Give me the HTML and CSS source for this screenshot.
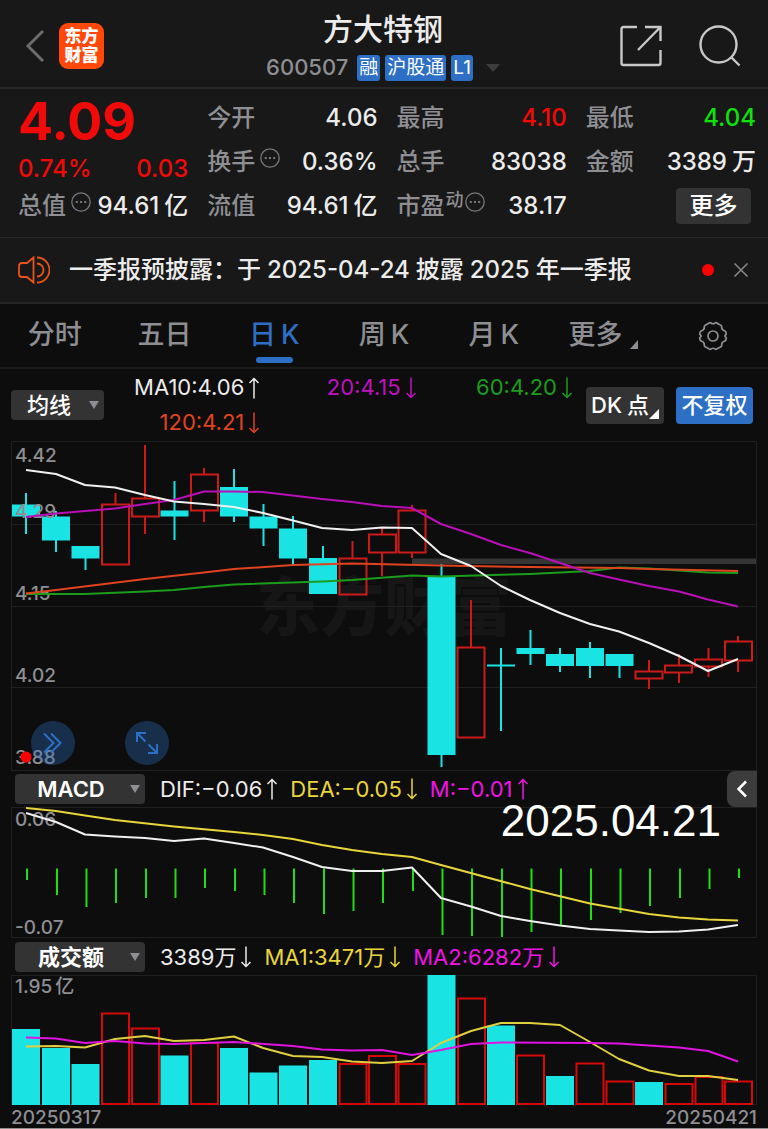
FILE: index.html
```html
<!DOCTYPE html>
<html lang="zh-CN">
<head>
    <meta charset="utf-8">
    <meta name="viewport" content="width=device-width, initial-scale=1">
    <title>方大特钢 600507</title>
    <link rel="stylesheet" href="styles.css">
</head>
<body>
    <svg class="defs" width="0" height="0" aria-hidden="true">
        <symbol id="up" viewBox="0 0 12 22"><path d="M6 21.500V1.500M1.500 6L6 1.500L10.500 6"/></symbol>
        <symbol id="down" viewBox="0 0 12 22"><path d="M6 .5V20.500M1.500 16L6 20.500L10.500 16"/></symbol>
        <symbol id="dots" viewBox="0 0 20 20">
            <circle cx="10" cy="10" r="9.200" fill="none" stroke="currentColor" stroke-width="1.300"/>
            <path d="M4.800 9h2v2h-2zM9 9h2v2h-2zM13.200 9h2v2h-2z" fill="currentColor"/>
        </symbol>
    </svg>

    <header class="header">
        <div class="header-left">
            <button class="icon-btn" aria-label="返回">
                <svg width="20" height="34" viewBox="0 0 20 34"><path d="M18 2L3 17L18 32" fill="none" stroke="#6b6b6b" stroke-width="3"/></svg>
            </button>
            <a href="#" class="logo"><span>东方</span><span>财富</span></a>
        </div>
        <div class="header-title">
            <h1>方大特钢</h1>
            <div class="stock-sub">
                <span class="code">600507</span>
                <span class="tag">融</span>
                <span class="tag">沪股通</span>
                <span class="tag">L1</span>
                <svg class="caret" width="14" height="8" viewBox="0 0 14 8"><path d="M0 0h14L7 8z" fill="#3d3d3f"/></svg>
            </div>
        </div>
        <div class="header-right">
            <button class="icon-btn" aria-label="分享">
                <svg width="42" height="42" viewBox="0 0 42 42" fill="none" stroke="#c8c8c8" stroke-width="2.400"><path d="M17 2H3.500Q1.500 2 1.500 4V38Q1.500 40 3.500 40H38.500Q40.500 40 40.500 38V25M25 2H40.500V16M40 2.500L18 25"/></svg>
            </button>
            <button class="icon-btn" aria-label="搜索">
                <svg width="42" height="42" viewBox="0 0 42 42" fill="none" stroke="#c8c8c8" stroke-width="2.400"><circle cx="19.500" cy="19.500" r="18"/><path d="M32 32L40.500 40.500"/></svg>
            </button>
        </div>
    </header>

    <section class="quote">
        <div class="quote-col">
            <div class="price">4.09</div>
            <div class="row change"><span>0.74%</span><span>0.03</span></div>
            <div class="row"><span class="label">总值<svg class="info"><use href="#dots"/></svg></span><span>94.61<span class="unit">亿</span></span></div>
        </div>
        <div class="quote-col">
            <div class="row"><span class="label">今开</span><span>4.06</span></div>
            <div class="row"><span class="label">换手<svg class="info"><use href="#dots"/></svg></span><span>0.36%</span></div>
            <div class="row"><span class="label">流值</span><span>94.61<span class="unit">亿</span></span></div>
        </div>
        <div class="quote-col">
            <div class="row"><span class="label">最高</span><span class="red">4.10</span></div>
            <div class="row"><span class="label">总手</span><span>83038</span></div>
            <div class="row"><span class="label">市盈<small>动</small><svg class="info"><use href="#dots"/></svg></span><span>38.17</span></div>
        </div>
        <div class="quote-col">
            <div class="row"><span class="label">最低</span><span class="green">4.04</span></div>
            <div class="row"><span class="label">金额</span><span>3389<span class="unit">万</span></span></div>
            <div class="row row-end"><button class="more-btn">更多</button></div>
        </div>
    </section>

    <section class="news">
        <svg width="32" height="28" viewBox="0 0 32 28" fill="none" stroke="#e8541a" stroke-width="1.800"><path d="M15.500 1.500V26.500L9 21H4Q1 21 1 18V10Q1 7 4 7H9ZM19 7.500A6.500 6.500 0 0 1 19 20.500M19 1.500A12.500 12.500 0 0 1 19 26.500"/></svg>
        <a href="#" class="news-text">一季报预披露：于<span class="num">2025-04-24</span>披露<span class="num">2025</span>年一季报</a>
        <span class="news-dot"></span>
        <button class="icon-btn" aria-label="关闭">
            <svg width="14" height="14" viewBox="0 0 14 14"><path d="M.5 .5L13.500 13.500M13.500 .5L.5 13.500" stroke="#8a8a8a" stroke-width="1.500"/></svg>
        </button>
    </section>

    <nav class="tabs">
        <button>分时</button>
        <button>五日</button>
        <button class="active">日<span class="unit">K</span></button>
        <button>周<span class="unit">K</span></button>
        <button>月<span class="unit">K</span></button>
        <button class="tab-more">更多<svg width="8" height="9" viewBox="0 0 8 9"><path d="M8 0V9H0z" fill="#8e8e93"/></svg></button>
        <button aria-label="设置">
            <svg width="30" height="30" viewBox="0 0 30 30" fill="none" stroke="#8e8e93" stroke-width="1.700"><path d="M10.500 2.500Q12 1 13 2Q15 3.500 17 2Q18 1 19.500 2.500L22.500 4Q24 4.500 23.700 6.500Q23.800 9 26.500 9.700Q28 10.500 28.300 12.500Q28.500 13.500 27.300 14.200Q26.500 15 27.300 15.800Q28.500 16.500 28.300 17.500Q28 19.500 26.500 20.300Q23.800 21 23.700 23.500Q24 25.500 22.500 26L19.500 27.500Q18 29 17 28Q15 26.500 13 28Q12 29 10.500 27.500L7.500 26Q6 25.500 6.300 23.500Q6.200 21 3.500 20.300Q2 19.500 1.700 17.500Q1.500 16.500 2.700 15.800Q3.500 15 2.700 14.200Q1.500 13.500 1.700 12.500Q2 10.500 3.500 9.700Q6.200 9 6.300 6.500Q6 4.500 7.500 4Z"/><circle cx="15" cy="15" r="5"/></svg>
        </button>
    </nav>

    <main class="charts">
        <div class="ma-bar">
            <label class="picker"><select aria-label="主图指标"><option>均线</option></select></label>
            <div class="ma-list">
                <span>MA10:4.06<svg class="arrow"><use href="#up"/></svg></span>
                <span class="purple">20:4.15<svg class="arrow"><use href="#down"/></svg></span>
                <span class="ma60">60:4.20<svg class="arrow"><use href="#down"/></svg></span>
                <span class="orange">120:4.21<svg class="arrow"><use href="#down"/></svg></span>
            </div>
            <div class="ma-actions">
                <button class="dk-btn">DK<span class="unit">点</span><svg width="10" height="10" viewBox="0 0 10 10"><path d="M10 0V10H0z" fill="#fff"/></svg></button>
                <button class="fq-btn">不复权</button>
            </div>
        </div>

        <div class="chart">
            <svg class="plot" viewBox="11 441 746 330">
                <text class="watermark" x="256" y="630">东方财富</text>
                <path class="grid" d="M11.500 441.500H756.500V770.500H11.500ZM11.500 524.500H756.500M11.500 606.500H756.500M11.500 687.500H756.500"/>
                <path d="M412 558.500H756V564H412z" fill="#353535"/>
                <!-- falling candles -->
                <path class="wick-down" d="M26 493V534M56 511V552M85.500 546V570M174.500 481V540M234 469V522M263.500 504V546M293 516V564M323 546V594M441.500 564V767M501 648V731M487 665.500H515M530.500 630V665M560 648V672M590 642V678M619.500 654V678"/>
                <path class="fall" d="M12 504.500h28v12h-28zM42 516.500h28v24h-28zM71.500 546h28v12.500h-28zM160.500 510.500h28v6h-28zM220 487h28v29.500h-28zM249.500 516.500h28v12h-28zM279 528.500h28v30h-28zM309 558h28v36h-28zM427.500 577h28v178h-28zM516.500 648h28v6h-28zM546 654h28v12h-28zM576 648h28v18h-28zM605.500 654h28v12h-28z"/>
                <!-- rising candles -->
                <path class="rise" d="M102 504.500h27v60h-27zM115.500 493V504M132 498.500h27v18h-27zM145 445V498M145 517V534M191 474.500h27v36h-27zM204 468V474M204 511V522M339.500 558.500h27v36h-27zM352.500 541V558M369 534.500h27v18h-27zM382 528V534M382 553V576M398.500 510.500h27v42h-27zM412 505V510M412 553V558M457.500 647.500h27v90h-27zM471 600V647M635.500 671.500h27v7h-27zM649 660V671M649 678V689M665 665.500h27v7h-27zM679 654V665M679 672V683M695 659.500h27v7h-27zM708.500 648V659M708.500 666V677M725 641.500h27v19h-27zM738 636V641M738 660V672"/>
                <g class="axis">
                    <text x="15" y="462">4.42</text>
                    <text x="15" y="518">4.29</text>
                    <text x="15" y="600">4.15</text>
                    <text x="15" y="682">4.02</text>
                    <text x="15" y="764">3.88</text>
                </g>
                <polyline class="line" stroke="#1c9c1c" points="26,594 85,594 145,591.5 174,590 204,587 234,584.5 322,581.5 352,580 412,575.5 441,576.5 530,574 590,571 619,567.5 649,568.5 708,572.5 738,573"/>
                <polyline class="line" stroke="#e0431f" points="26,593.5 56,590 145,579 204,572.5 234,569 293,565 352,563.5 441,565.5 530,567 619,568 649,569 738,571"/>
                <polyline class="line" stroke="#b80fb8" points="26,517 56,513.5 115,508.5 145,504 174,500 204,491.5 234,491.5 263,492 322,499 352,502 382,506 412,508 441,524 471,534 501,545 530,553 560,563 590,573 619,579.5 649,586 679,591.5 708,599.5 738,606.5"/>
                <polyline class="line" stroke="#f0f0f0" points="26,470 56,474 85,485 115,487.5 145,495 174,501.5 204,504 234,507 263,513 293,520.5 322,528 352,530 382,527.5 412,528 441,554 471,566 501,586 530,600 560,613 590,624 619,631.5 649,643 679,656 708,671 738,659"/>
                <circle cx="26" cy="757" r="5.500" fill="#f00"/>
            </svg>
            <div class="chart-tools">
                <button aria-label="快进"><svg width="20" height="22" viewBox="0 0 20 22"><path d="M1 1.500L10.500 11L1 20.500M8 1.500L17.500 11L8 20.500"/></svg></button>
                <button aria-label="全屏"><svg width="24" height="24" viewBox="0 0 24 24"><path d="M2 11V2H11M2 2L10.500 10.500M22 13V22H13M22 22L13.500 13.500"/></svg></button>
            </div>
        </div>

        <div class="legend">
            <label class="picker picker-wide"><select aria-label="副图指标一"><option>MACD</option></select></label>
            <span>DIF:−0.06<svg class="arrow"><use href="#up"/></svg></span>
            <span class="yellow">DEA:−0.05<svg class="arrow"><use href="#down"/></svg></span>
            <span class="magenta">M:−0.01<svg class="arrow"><use href="#up"/></svg></span>
            <button class="collapse" aria-label="展开">
                <svg width="10" height="18" viewBox="0 0 10 18"><path d="M9 1.500L1.500 9L9 16.500" fill="none" stroke="#fff" stroke-width="2.600"/></svg>
            </button>
        </div>

        <div class="chart">
            <svg class="plot" viewBox="11 807 746 132">
                <path class="grid" d="M11.500 807.500H756.500V937.500H11.500Z"/>
                <path class="macd-bar" d="M27 868.500V880M57 868.500V895M86.500 868.500V907M116 868.500V903M146 868.500V898M175.500 868.500V898M205 868.500V888M235 868.500V891M264.500 868.500V895M294 868.500V903M324 868.500V914M353.500 868.500V911M383 868.500V903M413 868.500V891M442.500 868.500V935M472 868.500V936M502 868.500V937M531.500 868.500V932M561 868.500V925M591 868.500V920M620.500 868.500V913M650 868.500V906M680 868.500V898M709.500 868.500V889M739 868.500V878"/>
                <g class="axis">
                    <text x="15" y="826">0.06</text>
                    <text x="15" y="934">-0.07</text>
                </g>
                <polyline class="line" stroke="#f0f0f0" points="26,813 56,822 85,834.5 115,836.5 145,838 174,841 204,838.5 234,843 263,847.5 293,857 322,867 352,871 382,871 412,867.5 441,898 471,906.5 501,916 530,921 560,925.5 590,929 619,930.5 649,932 679,931.5 708,929.5 738,925"/>
                <polyline class="line" stroke="#e8d53c" points="26,808 56,811 85,815.5 115,820 174,826.5 234,832 263,835 293,839 322,845 352,850 382,854 412,857 441,865 530,889 590,903.5 649,914 679,917.5 708,919.5 738,920.5"/>
            </svg>
            <div class="date-stamp">2025.04.21</div>
        </div>

        <div class="legend">
            <label class="picker picker-wide"><select aria-label="副图指标二"><option>成交额</option></select></label>
            <span>3389万<svg class="arrow"><use href="#down"/></svg></span>
            <span class="yellow">MA1:3471万<svg class="arrow"><use href="#down"/></svg></span>
            <span class="magenta">MA2:6282万<svg class="arrow"><use href="#down"/></svg></span>
        </div>

        <div class="chart">
            <svg class="plot" viewBox="11 975 746 130">
                <path class="grid" d="M11.500 975.500H756.500V1104.500H11.500Z"/>
                <path class="fall" d="M12 1029h28v76h-28zM42 1048h28v57h-28zM71.500 1064h28v41h-28zM160.500 1055.500h28v49.500h-28zM220 1048h28v57h-28zM249.500 1072.500h28v32.500h-28zM279 1065.500h28v39.500h-28zM309 1060h28v45h-28zM427.500 975h28v130h-28zM487 1025.500h28v79.500h-28zM546 1076h28v29h-28zM635 1082h28v23h-28z"/>
                <path class="vol-rise" d="M102 1013.500h27v90.500h-27zM132 1028.500h27v75.500h-27zM191 1043h27v61h-27zM339.500 1064h27v40h-27zM369 1056h27v48h-27zM398.500 1064h27v40h-27zM458 998.500h27v105.500h-27zM517 1055.500h27v48.500h-27zM576.500 1063.500h27v40.500h-27zM606.500 1081.500h27v22.500h-27zM665.500 1084h27v20h-27zM695.500 1077h27v27h-27zM725 1081.500h27v22.500h-27z"/>
                <g class="axis"><text x="15" y="993">1.95<tspan dx="3">亿</tspan></text></g>
                <polyline class="line" stroke="#e0d040" points="26,1046.5 56,1046 85,1047.5 115,1039 145,1036 174,1041 204,1040 234,1036.5 263,1048 293,1056 322,1057 352,1061.5 382,1063 412,1061 441,1043 471,1031 501,1023 530,1023 560,1025 590,1042 619,1059 649,1070.5 679,1076 708,1076 738,1080"/>
                <polyline class="line" stroke="#e013e0" points="26,1037.5 56,1038.5 85,1043 115,1041 145,1043.5 174,1044 234,1042 293,1046 322,1049.5 352,1050.5 382,1050 412,1055 441,1050 471,1044 501,1042.5 590,1043 619,1043.5 679,1047.5 708,1051 738,1061.5"/>
            </svg>
        </div>
        <div class="dates"><span>20250317</span><span>20250421</span></div>
    </main>
</body>
</html>
```
FILE: styles.css
```css
* {
    box-sizing: border-box;
}
body {
    margin: 0;
    background: #0d0d0d;
    color: #ececec;
    font-family: Inter, "Noto Sans CJK SC", sans-serif;
    font-size: 24px;
    font-weight: 500;
    line-height: 1.2;
    border-bottom: 1px solid #8e8e8e;
}
button, select {
    font: inherit;
    color: inherit;
    background: none;
    border: none;
    padding: 0;
    margin: 0;
    cursor: pointer;
}
a {
    color: inherit;
    text-decoration: none;
}
svg {
    flex: none;
}
.defs {
    position: absolute;
}
.icon-btn {
    display: flex;
}
.unit {
    margin-left: 5px;
}
.num {
    margin: 0 6px;
}
.red {
    color: #f00a0a;
}
.green {
    color: #10e010;
}
.purple {
    color: #c010c0;
}
.ma60 {
    color: #1c9c1c;
}
.orange {
    color: #e0431f;
}
.yellow {
    color: #e8d53c;
}
.magenta {
    color: #ee14e2;
}

/* header */
.header {
    display: grid;
    grid-template-columns: 1fr auto 1fr;
    align-items: center;
    height: 89px;
    padding: 4px 27px 0 25px;
    background: #181818;
    border-bottom: 2px solid #262627;
}
.header-left {
    display: flex;
    align-items: center;
    gap: 14px;
}
.header-right {
    display: flex;
    justify-content: flex-end;
    gap: 37px;
}
.logo {
    display: flex;
    flex-direction: column;
    align-items: center;
    justify-content: center;
    width: 45px;
    height: 46px;
    border-radius: 9px;
    background: #ff480a;
    color: #fff;
    font-size: 17px;
    font-weight: 900;
    line-height: 19px;
}
.header-title {
    text-align: center;
}
h1 {
    margin: 0;
    font-size: 30px;
    font-weight: 500;
    line-height: 44px;
}
.stock-sub {
    display: flex;
    align-items: center;
    justify-content: center;
    gap: 5px;
    height: 34px;
}
.code {
    margin-right: 4px;
    color: #8e8e93;
    font-size: 22px;
}
.tag {
    padding: 0 2px;
    border-radius: 3px;
    background: #2d6fc4;
    color: #fff;
    font-size: 19px;
    font-weight: 400;
    line-height: 26px;
}
.caret {
    margin-left: 8px;
}

/* quote */
.quote {
    display: grid;
    grid-template-columns: repeat(4, minmax(0, 1fr));
    gap: 19px;
    padding: 7px 12px 9px 18px;
    background: #181818;
    border-bottom: 1px solid #262627;
}
.price {
    height: 52px;
    color: #f00a0a;
    font-size: 52px;
    font-weight: 700;
    line-height: 52px;
}
.row {
    display: flex;
    align-items: center;
    justify-content: space-between;
    height: 44px;
    white-space: nowrap;
}
.row-end {
    justify-content: flex-end;
    padding-right: 5px;
}
.change {
    height: 36px;
    padding-top: 6px;
    color: #f00a0a;
}
.label {
    display: flex;
    align-items: center;
    color: #8e8e93;
}
.label small {
    font-size: 18px;
    padding: 0 1px 12px;
}
.info {
    width: 20px;
    height: 20px;
    margin: 0 0 8px 5px;
    color: #77777b;
}
small + .info {
    margin-left: 0;
}
.more-btn {
    width: 75px;
    height: 36px;
    border-radius: 4px;
    background: #333;
    color: #fff;
}

/* news */
.news {
    display: flex;
    align-items: center;
    height: 64px;
    padding: 0 20px 0 18px;
    background: #181818;
}
.news-text {
    flex: 1;
    margin-left: 19px;
    white-space: nowrap;
}
.news-dot {
    width: 12px;
    height: 12px;
    margin-right: 20px;
    border-radius: 50%;
    background: #f00;
}

/* period tabs */
.tabs {
    display: grid;
    grid-template-columns: repeat(7, 1fr);
    height: 67px;
    border-top: 2px solid #262627;
    border-bottom: 2px solid #1c1c1d;
    color: #8e8e93;
    font-size: 27px;
}
.tabs button {
    display: flex;
    align-items: center;
    justify-content: center;
    position: relative;
}
.tabs .active {
    color: #2d6fc4;
}
.tabs .active::after {
    content: "";
    position: absolute;
    bottom: 4px;
    width: 37px;
    height: 6px;
    border-radius: 3px;
    background: #2d6fc4;
}
.tab-more svg {
    margin: 18px 0 0 8px;
}

/* indicator bar */
.charts {
    padding: 0 11px;
    font-size: 22px;
    font-weight: 400;
}
.ma-bar {
    display: flex;
    align-items: center;
    height: 72px;
}
.picker {
    position: relative;
    display: block;
    width: 93px;
    height: 30px;
    flex: none;
}
.picker select {
    appearance: none;
    width: 100%;
    height: 100%;
    padding: 0 17px 0 0;
    border-radius: 4px;
    background: #333;
    color: #fff;
    font-weight: 500;
    text-align: center;
    text-align-last: center;
}
.picker::after {
    content: "";
    position: absolute;
    right: 5px;
    top: 11px;
    border: 5px solid transparent;
    border-top: 8px solid #8e8e93;
    border-bottom: 0;
    pointer-events: none;
}
.picker-wide {
    width: 130px;
    margin: 0 3px 0 4px;
}
.picker-wide select {
    padding-right: 18px;
    font-weight: 600;
}
.ma-list {
    flex: 1;
    display: grid;
    grid-template-columns: repeat(3, 1fr);
    line-height: 35px;
}
.ma-list span {
    display: flex;
    align-items: center;
    justify-content: flex-end;
}
.arrow {
    width: 12px;
    height: 22px;
    margin-left: 4px;
    fill: none;
    stroke: currentColor;
    stroke-width: 1.5;
}
.ma-actions {
    display: flex;
    gap: 12px;
    padding: 0 4px 0 13px;
    color: #fff;
    font-weight: 500;
}
.ma-actions button {
    height: 37px;
    border-radius: 4px;
    white-space: nowrap;
}
.ma-actions .dk-btn {
    display: flex;
    align-items: center;
    width: 78px;
    padding-left: 5px;
    background: #333;
}
.dk-btn svg {
    margin-top: 18px;
}
.ma-actions .fq-btn {
    width: 77px;
    background: #2d6fc4;
}

/* charts */
.chart {
    position: relative;
}
.plot {
    display: block;
    width: 100%;
    height: auto;
}
.grid {
    fill: none;
    stroke: #202021;
}
.watermark {
    fill: #161616;
    font-size: 64px;
    font-weight: 900;
}
.axis {
    fill: #8e8e93;
    font-size: 19px;
    font-weight: 500;
}
.fall {
    fill: #19e3e3;
}
.wick-down {
    stroke: #19e3e3;
    stroke-width: 2;
}
.rise {
    fill: none;
    stroke: #cc1a1a;
    stroke-width: 2;
}
.vol-rise {
    fill: none;
    stroke: #d60808;
    stroke-width: 2;
}
.macd-bar {
    stroke: #1fdc14;
    stroke-width: 2;
}
.line {
    fill: none;
    stroke-width: 2;
    stroke-linejoin: round;
}
.chart-tools {
    position: absolute;
    left: 20px;
    bottom: 6px;
    display: flex;
    gap: 50px;
}
.chart-tools button {
    display: flex;
    align-items: center;
    justify-content: center;
    width: 44px;
    height: 44px;
    border-radius: 50%;
    background: rgba(45, 111, 196, 0.35);
}
.chart-tools svg {
    fill: none;
    stroke: #2d6fc4;
    stroke-width: 2;
}
.date-stamp {
    position: absolute;
    right: 36px;
    top: -12px;
    color: #fff;
    font-family: "Liberation Sans", sans-serif;
    font-size: 44px;
    line-height: 52px;
}
.legend {
    display: flex;
    align-items: center;
    gap: 12px;
    height: 36px;
    white-space: nowrap;
}
.legend span {
    display: flex;
    align-items: center;
}
.collapse {
    display: flex;
    align-items: center;
    justify-content: center;
    width: 30px;
    height: 36px;
    margin-left: auto;
    border-radius: 8px 0 0 8px;
    background: #3c3c3c;
}
.dates {
    display: flex;
    justify-content: space-between;
    height: 23px;
    color: #8e8e93;
    font-size: 19px;
    font-weight: 500;
    line-height: 26px;
}
```
